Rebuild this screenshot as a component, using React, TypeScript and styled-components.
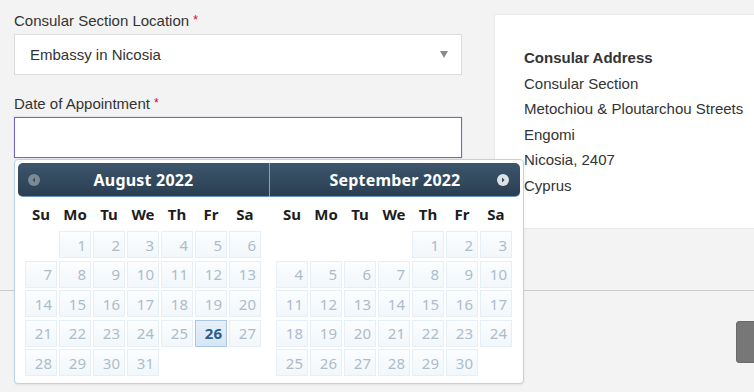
import { FC } from 'react';
import styled, { createGlobalStyle } from 'styled-components';

const GlobalStyle = createGlobalStyle`
  html, body {
    margin: 0;
    padding: 0;
    background: #f3f3f3;
    overflow: hidden;
  }
  body {
    font-family: 'Liberation Sans', Arial, sans-serif;
    color: #333;
  }
`;

type Day = { n: number; active?: boolean } | null;

const buildMonth = (offset: number, days: number, active?: number): Day[] => {
  const cells: Day[] = [];
  for (let i = 0; i < offset; i++) cells.push(null);
  for (let d = 1; d <= days; d++) cells.push({ n: d, active: d === active });
  return cells;
};

const MONTHS = [
  { title: 'August 2022', side: 'left' as const, cells: buildMonth(1, 31, 26) },
  { title: 'September 2022', side: 'right' as const, cells: buildMonth(4, 30) },
];

const DAY_NAMES = ['Su', 'Mo', 'Tu', 'We', 'Th', 'Fr', 'Sa'];

const NavIcon: FC<{ dir: 'prev' | 'next' }> = ({ dir }) => (
  <NavButton $dir={dir}>
    <svg width="12" height="12" viewBox="0 0 12 12">
      <circle cx="6" cy="6" r="6" fill={dir === 'prev' ? '#7c8a96' : '#dde2e7'} />
      {dir === 'prev' ? (
        <path d="M7 3.5 L4.5 6 L7 8.5 Z" fill="#3b4e60" />
      ) : (
        <path d="M5 3.5 L7.5 6 L5 8.5 Z" fill="#2f4558" />
      )}
    </svg>
  </NavButton>
);

const App: FC = () => {
  return (
    <>
      <GlobalStyle />
      <Page>
        <Main>
          <Column>
            <Field>
              <Label>
                Consular Section Location <Req>*</Req>
              </Label>
              <Select>
                <span>Embassy in Nicosia</span>
                <Caret />
              </Select>
            </Field>
            <Field>
              <Label>
                Date of Appointment <Req>*</Req>
              </Label>
              <DateInput />
              <Picker>
                {MONTHS.map((m) => (
                  <MonthGroup key={m.title}>
                    <MonthHeader $side={m.side}>
                      {m.side === 'left' && <NavIcon dir="prev" />}
                      <MonthTitle>{m.title}</MonthTitle>
                      {m.side === 'right' && <NavIcon dir="next" />}
                    </MonthHeader>
                    <DayNames>
                      {DAY_NAMES.map((d) => (
                        <DayName key={d}>{d}</DayName>
                      ))}
                    </DayNames>
                    <DayGrid>
                      {m.cells.map((c, i) =>
                        c ? (
                          <DayCell key={i} $active={c.active}>
                            {c.n}
                          </DayCell>
                        ) : (
                          <span key={i} />
                        ),
                      )}
                    </DayGrid>
                  </MonthGroup>
                ))}
              </Picker>
            </Field>
          </Column>
          <AddressCard>
            <strong>Consular Address</strong>
            <span>Consular Section</span>
            <span>Metochiou &amp; Ploutarchou Streets</span>
            <span>Engomi</span>
            <span>Nicosia, 2407</span>
            <span>Cyprus</span>
          </AddressCard>
        </Main>
        <Footer>
          <SubmitButton aria-label="Continue" />
        </Footer>
      </Page>
    </>
  );
};

const Page = styled.div`
  width: 860px;
`;

const Main = styled.section`
  display: grid;
  grid-template-columns: 448px 1fr;
  column-gap: 32px;
  align-items: start;
  padding: 10px 0 61px 14px;
`;

const Column = styled.div`
  display: flex;
  flex-direction: column;
  gap: 18px;
`;

const Field = styled.div`
  position: relative;
  display: flex;
  flex-direction: column;
`;

const Label = styled.label`
  font-size: 15px;
  line-height: 20px;
  margin-bottom: 3px;
  color: #333;
`;

const Req = styled.span`
  color: #d0021b;
  font-size: 12px;
  vertical-align: 2px;
`;

const Select = styled.div`
  height: 41px;
  box-sizing: border-box;
  display: flex;
  align-items: center;
  justify-content: space-between;
  padding: 0 13px 0 15px;
  background: #fff;
  border: 1px solid #dcdcdc;
  font-size: 15px;
  color: #333;
`;

const Caret = styled.span`
  width: 0;
  height: 0;
  border-left: 4px solid transparent;
  border-right: 4px solid transparent;
  border-top: 7px solid #8a8a8a;
`;

const DateInput = styled.div`
  height: 41px;
  box-sizing: border-box;
  background: #fff;
  border: 1px solid #7465c9;
  box-shadow: 0 0 1px rgba(116, 101, 201, 0.5);
`;

const Picker = styled.div`
  position: absolute;
  left: 0;
  top: calc(100% + 1px);
  width: 510px;
  box-sizing: border-box;
  display: flex;
  padding: 3px 3px 7px;
  background: #fff;
  border: 1px solid #b8d3ea;
  border-radius: 4px;
  box-shadow: 0 1px 2px rgba(0, 0, 0, 0.08);
  font-family: 'Noto Sans', 'DejaVu Sans', sans-serif;
  z-index: 5;
`;

const MonthGroup = styled.div`
  flex: 1;
  display: flex;
  flex-direction: column;
`;

const MonthHeader = styled.div<{ $side: 'left' | 'right' }>`
  position: relative;
  height: 34px;
  box-sizing: border-box;
  display: flex;
  align-items: center;
  justify-content: center;
  background: linear-gradient(#3c566d, #2a3e51);
  border-bottom: 1px solid #6d95b8;
  border-radius: ${(p) => (p.$side === 'left' ? '5px 0 0 5px' : '0 5px 5px 0')};
  ${(p) => p.$side === 'right' && 'border-left: 1px solid #7fa6c8;'}
`;

const MonthTitle = styled.span`
  color: #fff;
  font-weight: 700;
  font-size: 16px;
  letter-spacing: 0.2px;
`;

const NavButton = styled.span<{ $dir: 'prev' | 'next' }>`
  position: absolute;
  top: 11px;
  ${(p) => (p.$dir === 'prev' ? 'left: 10px;' : 'right: 11px;')}
  display: flex;
`;

const DayNames = styled.div`
  display: grid;
  grid-template-columns: repeat(7, 32px);
  column-gap: 2px;
  height: 34px;
  align-items: center;
  padding-left: 7px;
`;

const DayName = styled.span`
  text-align: center;
  font-weight: 700;
  font-size: 15px;
  color: #1d1d1d;
`;

const DayGrid = styled.div`
  display: grid;
  grid-template-columns: repeat(7, 32px);
  grid-auto-rows: 27px;
  column-gap: 2px;
  row-gap: 2.5px;
  padding-left: 7px;
`;

const DayCell = styled.span<{ $active?: boolean }>`
  box-sizing: border-box;
  display: flex;
  align-items: center;
  justify-content: flex-end;
  padding-right: 4px;
  font-size: 15px;
  border: 1px solid ${(p) => (p.$active ? '#a9c6e2' : '#e6eef6')};
  background: ${(p) =>
    p.$active ? 'linear-gradient(#e6f0f9, #d6e6f4)' : 'linear-gradient(#fbfdfe, #f2f7fb)'};
  color: ${(p) => (p.$active ? '#2a5d8c' : '#adbccb')};
  font-weight: ${(p) => (p.$active ? 700 : 400)};
`;

const AddressCard = styled.div`
  display: flex;
  flex-direction: column;
  margin-top: 4px;
  padding: 30px 0 30px 29px;
  background: #fff;
  border: 1px solid #e9e9e9;
  border-right: none;
  font-size: 15px;
  line-height: 25.5px;
  white-space: nowrap;
  color: #333;

  strong {
    font-weight: 700;
  }
`;

const Footer = styled.footer`
  display: flex;
  justify-content: flex-end;
  padding: 30px 14px 30px 0;
  border-top: 1px solid #cccccc;
`;

const SubmitButton = styled.button`
  width: 110px;
  height: 42px;
  background: #777;
  border: 1px solid #6a6a6a;
  border-radius: 3px;
`;

export default App;
